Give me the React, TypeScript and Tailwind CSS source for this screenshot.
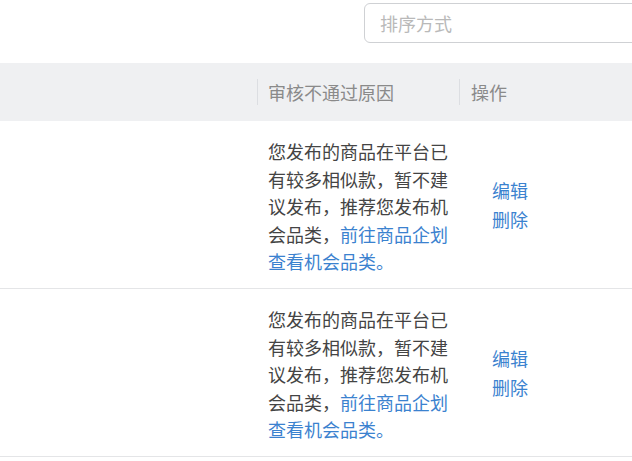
const font = { fontFamily: '"Noto Sans CJK SC", "Noto Sans", sans-serif' };

const reasonLines = ["您发布的商品在平台已", "有较多相似款，暂不建", "议发布，推荐您发布机"];

function Row() {
  return (
    <div className="flex border-b border-[#e4e5e7] h-[168px] items-center">
      <div className="w-[257px] shrink-0" />
      <div className="w-[202px] shrink-0 pl-[11px] pt-[5px] text-[18px] leading-[27.5px] text-[#444] whitespace-nowrap">
        {reasonLines.map((l) => (
          <div key={l}>{l}</div>
        ))}
        <div>
          会品类，<span className="text-[#3b82cf]">前往商品企划</span>
        </div>
        <div className="text-[#3b82cf]">查看机会品类。</div>
      </div>
      <div className="pl-[33px] text-[18px] leading-[29px] text-[#3b82cf] flex flex-col">
        <span>编辑</span>
        <span>删除</span>
      </div>
    </div>
  );
}

export default function App() {
  return (
    <div className="w-[632px] h-[461px] bg-white overflow-hidden" style={font}>
      <div className="flex h-[63px] pt-[3px] pl-[364px]">
        <div className="w-[300px] h-[40px] shrink-0 border border-[#cfd1d4] rounded-[6px] flex items-center pl-[15px] text-[18px] text-[#b9b9b9]">
          排序方式
        </div>
      </div>
      <div className="flex h-[58px] items-center bg-[#eff0f2] text-[18px] text-[#8a8a8a]">
        <div className="w-[257px] shrink-0" />
        <div className="w-[202px] shrink-0 flex items-center">
          <span className="w-px h-[26px] bg-[#dcdee2]" />
          <span className="ml-[10px]">审核不通过原因</span>
        </div>
        <div className="flex items-center">
          <span className="w-px h-[26px] bg-[#dcdee2]" />
          <span className="ml-[11px]">操作</span>
        </div>
      </div>
      <Row />
      <Row />
    </div>
  );
}
